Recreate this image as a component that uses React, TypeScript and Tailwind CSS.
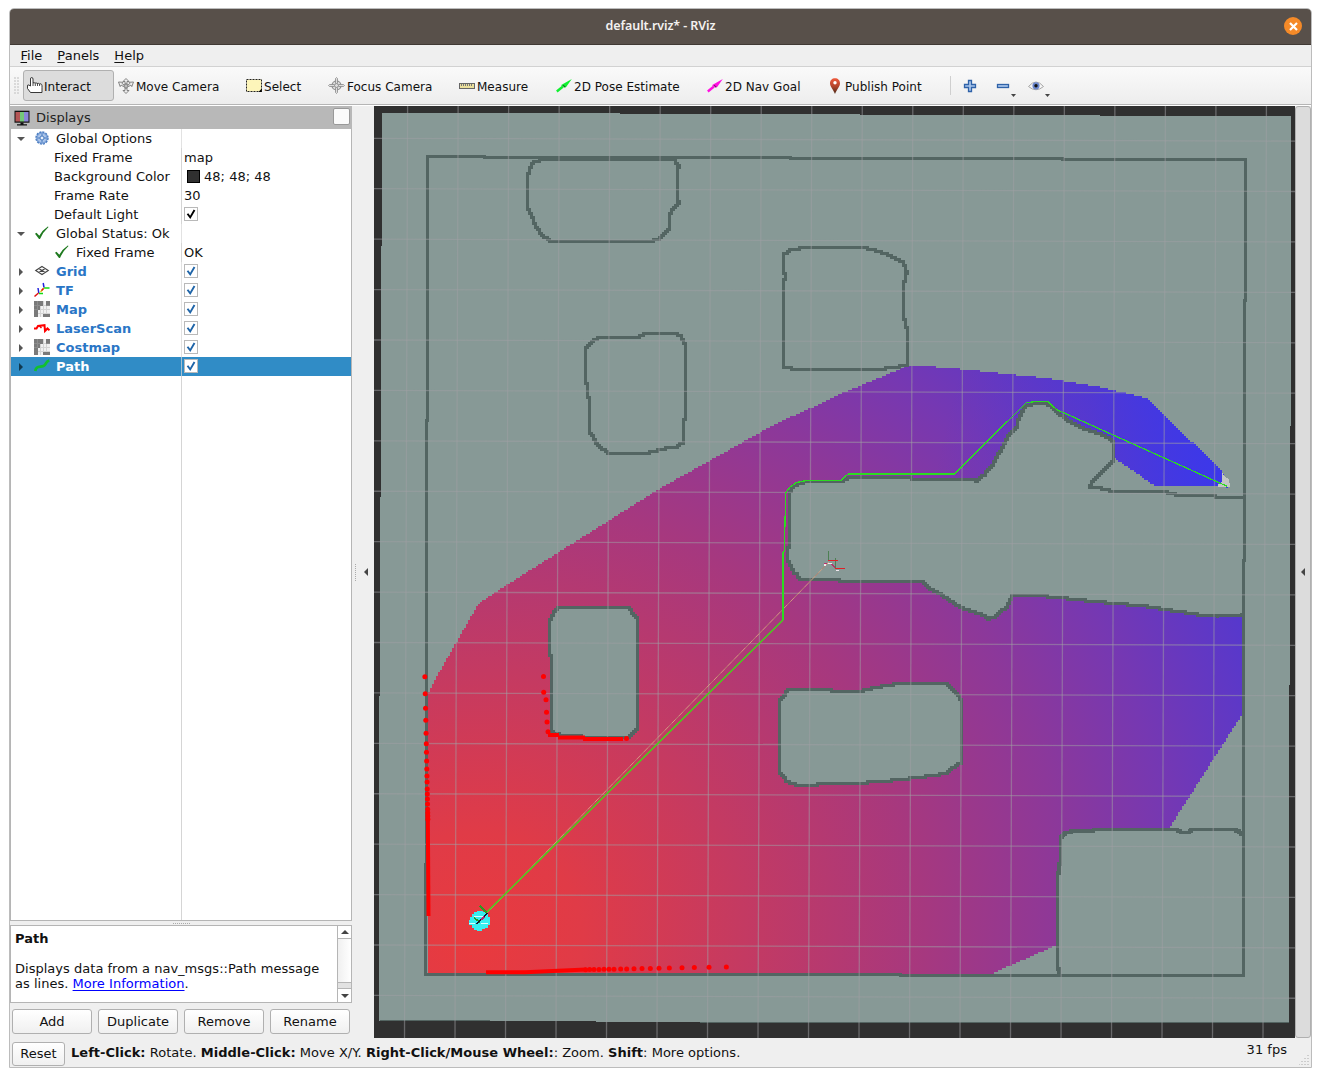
import React from "react";

type Pt = [number, number];

/** Turns a polyline into a stair-stepped path on the map's cell raster. */
function steps(points: Pt[], close = true, cell = 2): string {
  const pts = close ? [...points, points[0]] : points;
  const snap = (v: number) => Math.round(v / cell) * cell;
  let cx = snap(pts[0][0]);
  let cy = snap(pts[0][1]);
  let d = `M${cx} ${cy}`;
  for (let i = 1; i < pts.length; i++) {
    const [ax, ay] = pts[i - 1];
    const [bx, by] = pts[i];
    const n = Math.max(1, Math.ceil(Math.max(Math.abs(bx - ax), Math.abs(by - ay)) / cell));
    for (let k = 1; k <= n; k++) {
      const x = snap(ax + ((bx - ax) * k) / n);
      const y = snap(ay + ((by - ay) * k) / n);
      if (x !== cx) d += `H${x}`;
      if (y !== cy) d += `V${y}`;
      cx = x;
      cy = y;
    }
  }
  return close ? d + "Z" : d;
}

const FREE: Pt[] = [[427, 693], [433, 682], [456, 642], [479, 603], [512, 581], [658, 489], [760, 432], [782, 420.5], [810, 408], [843, 392], [903, 367], [910, 365], [960, 369], [1043, 378], [1093, 386], [1147, 398.5], [1222, 472], [1227, 487], [1155, 486], [1113, 457], [1085, 445], [1078, 500], [1100, 590], [1243, 612], [1243, 714], [1170, 828], [1100, 850], [1066, 900], [1057, 945], [993, 973], [427, 973]];

const BIG: Pt[] = [[1242, 498], [1218, 497], [1177, 495], [1168, 492.5], [1113, 492], [1103, 489], [1090, 488], [1093, 481], [1103, 469], [1113, 461], [1114, 455], [1113, 442], [1108, 437], [1088, 430], [1070, 421], [1053, 408], [1047, 404], [1038, 404], [1027, 406], [1020, 417], [1017, 427], [1007, 439], [1000, 453], [993, 465], [985, 475], [977, 481], [952, 480.5], [913, 479], [883, 478], [852, 477], [842, 482], [803, 483], [793, 487], [789, 495], [789, 547], [788, 560], [794, 573], [800, 580], [840, 581], [923, 582], [927, 587], [942, 596], [960, 608], [980, 614.5], [988, 619], [993, 617], [1007, 606], [1012, 596], [1047, 597], [1093, 602], [1143, 606.5], [1163, 610], [1197, 615], [1217, 617], [1242, 616.5]];

const OUTLINES: Pt[][] = [
  [[544, 160], [535.5, 162.5], [530, 170], [527, 181.5], [527, 205], [531, 215], [536, 228], [544, 237], [552, 242.5], [647, 242.5], [657, 239], [669, 227], [671, 211.5], [679, 201.5], [678, 178], [679, 166.5], [676, 160]],
  [[597, 339], [587, 347], [585, 366.5], [587, 386.5], [590, 406.5], [591, 435], [597, 446.5], [607, 453.5], [647, 453.5], [661, 449.5], [675.5, 448], [683, 441.5], [686.500, 400], [686.500, 346.5], [680, 335], [647, 333], [639, 337], [627, 338]],
  [[783, 366.5], [794, 369.8], [885, 369.8], [888, 367.5], [908, 366.5], [908, 330], [904, 316.5], [903, 300], [905, 280], [907, 271.5], [904, 262.5], [893, 257], [885, 254], [873, 250], [861, 247.5], [809, 247.5], [792, 250.5], [784, 256], [783, 271.5], [786, 276.5], [783.5, 290]],
  [[559, 607], [626, 607], [638, 620.5], [638, 730], [630, 738], [608, 738.5], [561, 735.5], [552, 732], [552, 690], [550, 620], [554, 612]],
  [[788, 689.5], [825, 689.5], [831, 691.5], [860, 692], [873, 688], [895, 684.5], [946, 684.5], [960, 697], [962, 705], [962, 763], [947, 774], [903, 780], [862, 783.5], [820, 784], [816, 786.5], [801, 786.5], [788, 782], [779, 770], [779, 701.5]],
  BIG,
];

const BOX: Pt[] = [[1058.3, 975], [1057.5, 876], [1060, 863], [1060, 836.5], [1066, 832], [1086, 831], [1101, 829.3], [1175, 829.3], [1180.5, 832.5], [1186, 832.5], [1191.5, 829.5], [1234, 829.5], [1241.5, 835]];

const LEFT_SCAN: Pt[] = [290, 341, 385, 421, 460, 491, 517, 543, 567, 588, 606, 627, 642, 657, 672, 688, 698, 708, 718].map(
  (v) => [374.2 + (152 + ((v - 290) * 9) / 428) / 3, 580 + v / 3] as Pt,
);
const BOTTOM_SCAN: Pt[] = [635, 647, 660, 675, 690, 705, 720, 740, 758, 780, 804, 829, 855, 886, 924, 961, 1005, 1057].map(
  (v) => [374 + v / 3, 580 + (1169 - ((v - 635) * 8) / 422) / 3] as Pt,
);
const OBSTACLE_SCAN: Pt[] = [[543.5, 676.5], [543.7, 692.3], [546, 699.7], [546.5, 712.3], [547, 722], [548, 731.7], [626.5, 738.5]];

function Scene() {
  const lines = Array.from({ length: 19 }, (_, i) => i);
  return (
    <svg className="block h-[932px] w-[921px] shrink-0" viewBox="374 106 921 932" shapeRendering="crispEdges">
      <defs>
        <radialGradient id="cost" gradientUnits="userSpaceOnUse" cx="474" cy="940" r="900">
          <stop offset="0" stopColor="#e93a3e" />
          <stop offset="0.12" stopColor="#e03b47" />
          <stop offset="0.3" stopColor="#c43a62" />
          <stop offset="0.5" stopColor="#a6387f" />
          <stop offset="0.66" stopColor="#8c389a" />
          <stop offset="0.78" stopColor="#7638b2" />
          <stop offset="0.92" stopColor="#5738cc" />
          <stop offset="1" stopColor="#4538df" />
        </radialGradient>
        <linearGradient id="far" gradientUnits="userSpaceOnUse" x1="950" y1="400" x2="1220" y2="460">
          <stop offset="0" stopColor="#3a38ec" stopOpacity="0" />
          <stop offset="0.5" stopColor="#3a38ec" stopOpacity="0.22" />
          <stop offset="1" stopColor="#3a38ec" stopOpacity="0.85" />
        </linearGradient>
        <clipPath id="free">
          <path d={steps(FREE)} />
        </clipPath>
      </defs>
      <rect x="374" y="106" width="921" height="932" fill="#303030" />
      <path d="M382 113H620V114H860V115H1100V115.6H1291V300L1290 560L1289 820V1023H1100V1022H700L490 1021H379V800L380.500 500L381.500 250Z" fill="#879996" />
      <path d="M380 1020.500H490M700 1022H1289" stroke="#546562" fill="none" />
      <g clipPath="url(#free)">
        <rect x="420" y="360" width="830" height="620" fill="url(#cost)" />
        <rect x="870" y="360" width="370" height="140" fill="url(#far)" />
      </g>
      <path d="M1222 472l2 4 5 3 1 8h-12v-3l4-2z" fill="#c3c6c5" />
      <g transform="translate(-0.5 -0.5)">
        {OUTLINES.map((o, i) => (
          <path key={i} d={steps(o)} fill="#879996" stroke="#536562" strokeWidth="3" />
        ))}
      </g>
      <path d="M1238 499h5v114h-5z" fill="#879996" />
      <path d={steps([...BOX, [1242, 975]], true, 1.5)} fill="#879996" />
      <path d={steps(BOX, false, 1.5)} fill="none" stroke="#536562" strokeWidth="3.200" />
      <path
        d="M427.500 156.500H484V157.500H790V158.500H1062V159H1245.500V300H1244.500V560H1243.500V700H1243V975.500H900V974.500H425.500V930L426.500 800V640H426V420H427.500Z"
        fill="none"
        stroke="#536562"
        strokeWidth="3"
      />

      <g stroke="#a0a0a4" strokeOpacity="0.5" strokeWidth="1.300" shapeRendering="auto">
        {lines.map((i) => (
          <React.Fragment key={i}>
            <line x1={407.6 + i * 50.52} y1="106" x2={404.5 + i * 50.5} y2="1038" />
            <line x1="374" y1={138.3 + i * 50.42} x2="1295" y2={141.1 + i * 50.42} />
          </React.Fragment>
        ))}
      </g>

      <g shapeRendering="auto" fill="none">
        <path d="M480 920L829 562" stroke="#d8a484" strokeWidth="1" strokeOpacity="0.900" />
        <path d="M480 920L829 562" stroke="#6a3a40" strokeWidth="0.900" strokeDasharray="5 5" strokeOpacity="0.350" />
        <path d="M783 620L487 912" stroke="#45d41a" strokeWidth="1.500" />
      </g>
      <path
        d="M1227.500 486.500L1056.500 409.500L1048 401.700H1035L1026.500 402.500L954.500 474H848L841 480.500H806.500L796.500 482.500L790 487L785.500 493L784.500 551.500L783 552.500V620"
        fill="none"
        stroke="#2bdc20"
        strokeWidth="1.200"
      />

      <g fill="#ff0000" shapeRendering="auto">
        {[...LEFT_SCAN, ...BOTTOM_SCAN, ...OBSTACLE_SCAN].map(([x, y], i) => (
          <circle key={i} cx={x} cy={y} r="2.500" />
        ))}
      </g>
      <g fill="none" stroke="#ff0000" strokeWidth="4" shapeRendering="auto">
        <path d="M427.800 812L428.500 916" />
        <path d="M486 972.300H525L586 969.500" />
        <path d="M548 735H559M558 737.500H585M583 739H623" />
      </g>

      <path
        d="M477 911h6v1h3v2h2v3h2v8h-2v3h-3v1h-3v2h-5v-1h-3v-2h-2v-3h-3v-5h1v-3h2v-3h2v-2h3z"
        fill="#36eef0"
      />
      <path d="M474 916h9M469 923h6M481 923h7M476 920h3" stroke="#d9ffff" fill="none" />
      <path d="M480 906L487 913M474 918l6 4" stroke="#2c9a22" strokeWidth="1.500" />
      <path d="M477 924L487 913" stroke="#1a1830" strokeWidth="1.500" />
      <path d="M481 920l3-3" stroke="#b02a70" strokeWidth="1.500" />

      <path d="M828.500 551v10M835.500 558v10" stroke="#4d8053" />
      <path d="M828 560.500h10M835 568.500h10" stroke="#e01f26" strokeWidth="1.500" />
      <path d="M824 563.500h3M831 564l4 3" stroke="#b5326c" strokeWidth="1.500" />
      <path d="M824 565h2M828 563.500h4M836 570.500h3" stroke="#f0e8ee" strokeWidth="1.500" />
    </svg>
  );
}

const I = "block size-4 shrink-0";

const HandIcon = () => (
  <svg className="block h-[17px] w-[17px] shrink-0" viewBox="0 0 17 17">
    <path d="M4.500 9V2q0-1.500 1.200-1.500T7 2v4q1.100-.9 2 .2 1.200-.8 2.200.3 1.200-.6 2.200.4 2-.5 2.300.6.500 1 .3 3v5H4.500L1.500 11.500V9q0-1.500 1.300-1L4.500 9z" fill="#fff" stroke="#222" strokeWidth=".9" />
    <path d="M7 6v3M9.300 6.500v2.500M11.500 6.500v2.500M13.600 7v2" stroke="#222" strokeWidth=".8" />
  </svg>
);
const MoveIcon = () => (
  <svg className={I} viewBox="0 0 16 16" fill="#eee" stroke="#777" strokeWidth=".9">
    <path d="M8 .5L11 3.500H9v2.500h-2V3.500H5zM8 15.500L5 12.500h2V10h2v2.500h2z" />
    <path d="M.5 4L5 4.300l-.9 1.300 2.500 1.500-1 1.500-2.500-1.500-.9 1.500zM15.500 4l-4.500.3.9 1.300-2.500 1.500 1 1.500 2.500-1.500.9 1.500z" />
    <circle cx="8" cy="8" r="2" fill="#bbb" />
  </svg>
);
const SelectIcon = () => (
  <svg className={I} viewBox="0 0 16 16">
    <rect x=".5" y="1.500" width="15" height="12" fill="#fdf5ba" stroke="#222" strokeDasharray="2 1" />
    <path d="M15.800 10.500v3.500H12.500z" fill="#000" />
  </svg>
);
const FocusIcon = () => (
  <svg className="block size-[17px] shrink-0" viewBox="0 0 17 17" fill="none" stroke="#888">
    <circle cx="8.500" cy="8.500" r="4.500" fill="#ddd" strokeWidth="1.200" />
    <circle cx="8.500" cy="8.500" r="2" />
    <path d="M7.500 6V1.500l1-1 1 1V6M7.500 11v4.500l1 1 1-1V11M6 7.500H1.500l-1 1 1 1H6M11 7.500h4.500l1 1-1 1H11" fill="#ddd" strokeWidth=".8" />
  </svg>
);
const MeasureIcon = () => (
  <svg className={I} viewBox="0 0 16 16">
    <rect x=".5" y="5.500" width="15" height="5" fill="#eadf9c" stroke="#666" />
    <path d="M2.500 6v2M4.500 6v2M6.500 6v2M8.500 6v2M10.500 6v2M12.500 6v2" stroke="#777" />
  </svg>
);
const ArrowIcon = ({ color, dark }: { color: string; dark: string }) => (
  <svg className={I} viewBox="0 0 16 16">
    <path d="M.8 13.500L7 8.500" stroke={color} strokeWidth="2.400" />
    <path d="M4.800 7.200L15.800 1 9.800 9.500 8 8.600z" fill={color} />
    <path d="M7 7.200l2.200 2" stroke={dark} strokeWidth="1.200" />
  </svg>
);
const PinIcon = () => (
  <svg className={I} viewBox="0 0 16 16">
    <defs>
      <linearGradient id="pin" x1="0" y1="0" x2="0" y2="1">
        <stop offset="0" stopColor="#ef5a3c" />
        <stop offset=".5" stopColor="#b5452c" />
        <stop offset="1" stopColor="#4a2a18" />
      </linearGradient>
    </defs>
    <path d="M8 .3c2.900 0 5 2.100 5 4.900C13 8.500 10 11 8 15.900 6 11 3 8.500 3 5.200 3 2.400 5.100.3 8 .3z" fill="url(#pin)" />
    <circle cx="8" cy="4.800" r="1.700" fill="#fff" />
  </svg>
);

const Tool = ({ icon, label, className }: { icon: React.ReactNode; label: string; className: string }) => (
  <div className={`flex h-[31px] shrink-0 items-center gap-[2px] text-[12px] ${className}`}>
    {icon}
    <span className="pt-[3px] leading-4">{label}</span>
  </div>
);

const Drop = () => (
  <svg className="absolute right-[-6px] bottom-[-4px] h-[3px] w-[5px]" viewBox="0 0 5 3">
    <path d="M0 0h5L2.500 3z" fill="#444" />
  </svg>
);

const GearIcon = () => (
  <svg className={I} viewBox="0 0 16 16">
    <circle cx="8" cy="8" r="6" fill="#a9c3e8" stroke="#4a7cc0" strokeWidth="1.400" strokeDasharray="2.100 1" />
    <circle cx="8" cy="8" r="5" fill="#a9c3e8" stroke="#5f8ccb" strokeWidth=".8" />
    <circle cx="8" cy="8" r="2" fill="#e9f0fa" stroke="#4a7cc0" />
    <path d="M8 3.500V6M8 10v2.500M3.500 8H6M10 8h2.500" stroke="#4a7cc0" />
  </svg>
);
const CheckIcon = () => (
  <svg className={I} viewBox="0 0 16 16">
    <path d="M1 8.800L2.500 7.800l2.800 3Q8.500 5 13.800 1.500L14.500 2Q9 7 6 14H5z" fill="#1f7a1f" />
  </svg>
);
const GridIcon = () => (
  <svg className={I} viewBox="0 0 16 16" fill="none" stroke="#444">
    <path d="M8 3.500L14.300 7.500 8 11.500 1.700 7.500zM4.800 5.500l6.400 4M11.200 5.500l-6.400 4" strokeWidth="1.100" />
  </svg>
);
const TfIcon = () => (
  <svg className={I} viewBox="0 0 16 16" fill="none" strokeWidth="1.500">
    <path d="M9.200 1l.8 4.500M4 6l.8 5" stroke="#2222dd" />
    <path d="M10 6h5.500M5 11.500h4" stroke="#11dd11" />
    <path d="M.5 14.500L4.500 11" stroke="#e01010" />
    <path d="M6.500 10L10 6" stroke="#e8c020" />
    <path d="M7.500 8.500l2-2" stroke="#e01010" />
  </svg>
);
const MapIcon = () => (
  <svg className={I} viewBox="0 0 16 16" shapeRendering="crispEdges">
    <rect width="16" height="16" fill="#f1f1f1" />
    <path d="M0 4.500h16M0 8.500h16M0 12.500h16M3.500 0v16M6.500 0v16M9.500 0v16M12.500 0v16" stroke="#d4d4d4" />
    <path d="M0 0h9v5H6v4H4v7H0zM12 0h4v5h-4zM9 13h7v3H9z" fill="#7a7a7a" />
    <path d="M0 4.500h6M3.500 0v9M12 4.500h4M0 8.500h4" stroke="#8d8d8d" />
  </svg>
);
const ScanIcon = () => (
  <svg className={I} viewBox="0 0 16 16">
    <path d="M0 8.500h2.500L4 6l6.500-.8L11 11l2.500-2.500 2 1.800" fill="none" stroke="#f00" strokeWidth="2" />
    <path d="M5 5.500L7.500 8" stroke="#f00" strokeWidth="1.500" />
  </svg>
);
const PathIcon = () => (
  <svg className={I} viewBox="0 0 16 16">
    <path d="M1.200 13C2.500 7 6 9.500 9.500 8 13 6.500 11 3.500 15.300 2.500" fill="none" stroke="#12c02e" strokeWidth="2.800" />
  </svg>
);

const CheckBox = ({ color }: { color: string }) => (
  <span className="mb-px flex size-[14px] items-center justify-center border border-[#b9b9b9] bg-white">
    <svg className="block size-3" viewBox="0 0 12 12">
      <path d="M2.500 5.800l2.700 3.600L9.500 2" fill="none" stroke={color} strokeWidth="1.900" />
    </svg>
  </span>
);

const Expander = ({ open, dark }: { open?: boolean; dark?: boolean }) => (
  <svg className="block h-2 w-2 shrink-0" viewBox="0 0 8 8">
    <path d={open ? "M0 2h8L4 6z" : "M2 0v8l4-4z"} fill={dark ? "#11394f" : "#555"} />
  </svg>
);

const Branch = ({ open, icon, label, checked, selected, display }: {
  open?: boolean; icon: React.ReactNode; label: string; checked?: boolean; selected?: boolean; display?: boolean;
}) => (
  <div className={`flex h-[19px] items-center ${selected ? "bg-[#308cc6] text-white" : display ? "text-[#2a76c6]" : ""}`}>
    <div className="flex h-full w-[171px] shrink-0 items-center border-r border-[#d5d5d5]/70 pl-[6px]">
      <Expander open={open} dark={selected} />
      <span className="mb-px ml-[9px]">{icon}</span>
      <span className={`ml-[6px] leading-[19px] ${display ? "font-bold" : ""}`}>{label}</span>
    </div>
    {checked && <div className="pl-[2px]"><CheckBox color="#1e64a8" /></div>}
  </div>
);

const Leaf = ({ label, icon, children }: { label: string; icon?: React.ReactNode; children: React.ReactNode }) => (
  <div className="flex h-[19px] items-center">
    <div className="flex h-full w-[171px] shrink-0 items-center border-r border-[#d5d5d5] pl-[43px]">
      {icon && <span className="mr-[6px] mb-px">{icon}</span>}
      <span className="leading-[19px]">{label}</span>
    </div>
    <div className="flex items-center pl-[2px] leading-[19px]">{children}</div>
  </div>
);

const Button = ({ label, className }: { label: string; className: string }) => (
  <div className={`flex items-center justify-center rounded-[3px] border border-[#b0b0b0] bg-linear-to-b from-white to-[#f0f0f0] ${className}`}>
    {label}
  </div>
);

export default function App() {
  return (
    <div className="h-[1077px] w-[1321px] overflow-hidden bg-white pt-2 pl-[9px] font-['DejaVu_Sans',sans-serif] text-[13px] tracking-[0.02px] text-[#111]">
      <div className="flex h-[1060px] w-[1303px] flex-col overflow-hidden rounded-t-[5px] border border-[#bcbcbc] bg-[#efefef]">
        <div className="relative flex h-9 shrink-0 items-center justify-center border-b border-[#403934] bg-[#58504a] font-['Noto_Sans',sans-serif] text-[12.500px] font-semibold text-[#f3f1ef]">
          <span className="tracking-[-0.1px]">default.rviz* - RViz</span>
          <span className="absolute top-[8px] right-[9px] flex size-[18px] items-center justify-center rounded-full bg-[#f58a28]">
            <svg className="size-[9px]" viewBox="0 0 9 9">
              <path d="M1 1l7 7M8 1L1 8" stroke="#fff" strokeWidth="2.200" />
            </svg>
          </span>
        </div>

        <div className="flex h-[22px] shrink-0 items-center gap-[15px] border-b border-[#d2d2d2] pl-[10.500px]">
          {["File", "Panels", "Help"].map((m) => (
            <span key={m}>
              <span className="underline underline-offset-2">{m[0]}</span>
              {m.slice(1)}
            </span>
          ))}
        </div>

        <div className="flex h-[38px] shrink-0 items-center border-b border-[#b5b5b5] bg-linear-to-b from-[#fafafa] to-[#ededed]">
          <div className="mr-[4px] ml-[4px] h-[17px] w-[5px] bg-[radial-gradient(circle_at_1px_1px,#d0d0d0_0.6px,transparent_1px)] bg-[size:3px_3px]" />
          <Tool icon={<HandIcon />} label="Interact" className="mr-[4px] w-[91px] rounded-[3px] border border-[#b0b0b0] bg-[#dcdcdc] pl-[2px] !gap-[1px]" />
          <Tool icon={<MoveIcon />} label="Move Camera" className="w-[128px]" />
          <Tool icon={<SelectIcon />} label="Select" className="w-[82px]" />
          <Tool icon={<FocusIcon />} label="Focus Camera" className="w-[131px]" />
          <Tool icon={<MeasureIcon />} label="Measure" className="w-[97px]" />
          <Tool icon={<ArrowIcon color="#10f030" dark="#0a7a1c" />} label="2D Pose Estimate" className="w-[151px]" />
          <Tool icon={<ArrowIcon color="#ff10e0" dark="#8a0a78" />} label="2D Nav Goal" className="w-[120px]" />
          <Tool icon={<PinIcon />} label="Publish Point" className="w-[123px]" />
          <div className="mr-[12px] h-[19px] w-px bg-[#cfcfcf]" />
          <svg className="mr-[19px] block size-[14px]" viewBox="0 0 14 14">
            <path d="M5.500 1.500h3v4h4v3h-4v4h-3v-4h-4v-3h4z" fill="#a9c6ec" stroke="#2f62a8" strokeWidth="1.300" />
          </svg>
          <span className="relative mr-[18px] block size-[14px]">
            <svg className="block size-[14px]" viewBox="0 0 14 14">
              <rect x="1.500" y="5.500" width="11" height="3" fill="#a9c6ec" stroke="#2f62a8" strokeWidth="1.300" />
            </svg>
            <Drop />
          </span>
          <span className="relative block h-[14px] w-4">
            <svg className="block h-[14px] w-4" viewBox="0 0 16 14">
              <path d="M.5 7.500Q8-1.500 15.500 7.500 8 14 .5 7.500z" fill="#f6f6f6" stroke="#a5a5a5" />
              <circle cx="8" cy="6.800" r="3.600" fill="#6a86cc" />
              <circle cx="8" cy="6.800" r="1.700" fill="#111" />
            </svg>
            <Drop />
          </span>
        </div>

        <div className="flex h-[933px] shrink-0 border-t border-white">
          <div className="flex w-[342px] shrink-0 flex-col">
            <div className="flex h-[23px] shrink-0 items-center bg-[#b8b8b8] pr-[2px] pl-1">
              <svg className={I} viewBox="0 0 16 16">
                <rect x=".5" y=".7" width="15" height="12" fill="#111" />
                <path d="M1.500 2H6v9.500H1.500z" fill="#b45555" />
                <path d="M6 2h4v9.500H6z" fill="#74c878" />
                <path d="M10 2h4.500v9.500H10z" fill="#8a86d8" />
                <path d="M6.500 12.500h3v1.700H13v1.300H3v-1.300h3.500z" fill="#111" />
              </svg>
              <span className="ml-[6px] text-[#222]">Displays</span>
              <span className="mb-[2px] ml-auto size-[17px] rounded-[2px] border border-[#999] bg-[#fafafa]" />
            </div>
            <div className="flex h-[792px] shrink-0 flex-col border border-t-0 border-[#b5b5b5] bg-white">
              <Branch open icon={<GearIcon />} label="Global Options" />
              <Leaf label="Fixed Frame">map</Leaf>
              <Leaf label="Background Color">
                <span className="mr-[4px] ml-[3px] size-[13px] border border-black bg-[#303030]" />
                48; 48; 48
              </Leaf>
              <Leaf label="Frame Rate">30</Leaf>
              <Leaf label="Default Light"><CheckBox color="#000" /></Leaf>
              <Branch open icon={<CheckIcon />} label="Global Status: Ok" />
              <Leaf label="Fixed Frame" icon={<CheckIcon />}>OK</Leaf>
              <Branch display checked icon={<GridIcon />} label="Grid" />
              <Branch display checked icon={<TfIcon />} label="TF" />
              <Branch display checked icon={<MapIcon />} label="Map" />
              <Branch display checked icon={<ScanIcon />} label="LaserScan" />
              <Branch display checked icon={<MapIcon />} label="Costmap" />
              <Branch display checked selected icon={<PathIcon />} label="Path" />
              <div className="w-[171px] grow border-r border-[#d5d5d5]" />
            </div>
            <div className="flex h-[4px] shrink-0 items-center justify-center">
              <span className="w-[17px] border-t border-dotted border-[#aaa]" />
            </div>
            <div className="flex h-[78px] shrink-0 border border-[#b5b5b5] bg-white">
              <div className="grow pt-[5px] pl-[4px] leading-[15px]">
                <b>Path</b>
                <p className="mt-[15px]">
                  Displays data from a nav_msgs::Path message<br />
                  as lines. <span className="text-[#0000ff] underline underline-offset-2">More Information</span>.
                </p>
              </div>
              <div className="flex w-[14px] flex-col border-l border-[#b5b5b5]">
                <div className="flex h-[13px] items-center justify-center border-b border-[#b5b5b5]">
                  <svg className="h-1 w-2" viewBox="0 0 8 4"><path d="M0 4L4 0l4 4z" fill="#444" /></svg>
                </div>
                <div className="grow bg-linear-to-r from-[#f0f0f0] to-white" />
                <div className="h-[7px] border-y border-[#b5b5b5] bg-[#e2e2e2]" />
                <div className="flex h-[13px] items-center justify-center">
                  <svg className="h-1 w-2" viewBox="0 0 8 4"><path d="M0 0h8L4 4z" fill="#444" /></svg>
                </div>
              </div>
            </div>
            <div className="flex gap-[6px] pt-[6px] pl-[2px]">
              <Button label="Add" className="h-[25px] w-20" />
              <Button label="Duplicate" className="h-[25px] w-20" />
              <Button label="Remove" className="h-[25px] w-20" />
              <Button label="Rename" className="h-[25px] w-20" />
            </div>
          </div>

          <div className="flex w-[22px] shrink-0 items-center justify-between pr-[6px] pl-[3px]">
            <span className="h-[17px] border-l border-dotted border-[#aaa]" />
            <svg className="h-2 w-1" viewBox="0 0 4 8"><path d="M4 0v8L0 4z" fill="#444" /></svg>
          </div>

          <Scene />

          <div className="flex h-[932px] w-4 shrink-0 items-center justify-center rounded-[3px] border border-[#b0b0b0] bg-[#dcdcdc]">
            <svg className="h-2 w-1" viewBox="0 0 4 8"><path d="M4 0v8L0 4z" fill="#444" /></svg>
          </div>
        </div>

        <div className="relative flex grow items-center pl-[2px]">
          <Button label="Reset" className="mt-[2px] h-6 w-[53px]" />
          <span className="ml-[6px]">
            <b>Left-Click:</b> Rotate. <b>Middle-Click:</b> Move X/Y. <b>Right-Click/Mouse Wheel:</b>: Zoom. <b>Shift</b>: More options.
          </span>
          <span className="mr-[24px] mb-[5px] ml-auto">31 fps</span>
          <svg className="absolute right-[2px] bottom-[2px] size-[10px]" viewBox="0 0 10 10">
            <path d="M9 0v1M9 3v1M6 3v1M9 6v1M6 6v1M3 6v1M9 9v1M6 9v1M3 9v1M0 9v1" stroke="#aaa" />
          </svg>
        </div>
      </div>
    </div>
  );
}
